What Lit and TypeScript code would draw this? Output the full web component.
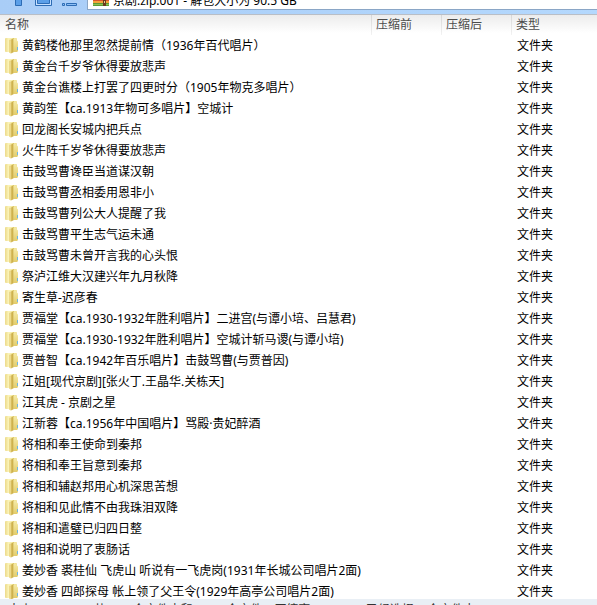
import { LitElement, html, css, svg } from "lit";
import { customElement, property } from "lit/decorators.js";

const FOLDERS = [
  "黄鹤楼他那里忽然提前情（1936年百代唱片）",
  "黄金台千岁爷休得要放悲声",
  "黄金台谯楼上打罢了四更时分（1905年物克多唱片）",
  "黄韵笙【ca.1913年物可多唱片】空城计",
  "回龙阁长安城内把兵点",
  "火牛阵千岁爷休得要放悲声",
  "击鼓骂曹谗臣当道谋汉朝",
  "击鼓骂曹丞相委用恩非小",
  "击鼓骂曹列公大人提醒了我",
  "击鼓骂曹平生志气运未通",
  "击鼓骂曹未曾开言我的心头恨",
  "祭泸江维大汉建兴年九月秋降",
  "寄生草-迟彦春",
  "贾福堂【ca.1930-1932年胜利唱片】二进宫(与谭小培、吕慧君)",
  "贾福堂【ca.1930-1932年胜利唱片】空城计斩马谡(与谭小培)",
  "贾普智【ca.1942年百乐唱片】击鼓骂曹(与贾普因)",
  "江姐[现代京剧][张火丁.王晶华.关栋天]",
  "江其虎 - 京剧之星",
  "江新蓉【ca.1956年中国唱片】骂殿·贵妃醉酒",
  "将相和奉王使命到秦邦",
  "将相和奉王旨意到秦邦",
  "将相和辅赵邦用心机深思苦想",
  "将相和见此情不由我珠泪双降",
  "将相和遣璧已归四日整",
  "将相和说明了衷肠话",
  "姜妙香 裘桂仙 飞虎山 听说有一飞虎岗(1931年长城公司唱片2面)",
  "姜妙香 四郎探母 帐上领了父王令(1929年高亭公司唱片2面)",
];

const folderIcon = html`<svg width="14" height="17" viewBox="0 0 14 17" aria-hidden="true">
  ${svg`
  <defs>
    <linearGradient id="back" x1="0" x2="1"><stop offset="0" stop-color="#ecd98a"/><stop offset=".3" stop-color="#fbf4b8"/><stop offset="1" stop-color="#efe08f"/></linearGradient>
    <linearGradient id="fold" x1="0" x2="1"><stop offset="0" stop-color="#e6d07a"/><stop offset=".6" stop-color="#cdb04c"/><stop offset="1" stop-color="#dcc465"/></linearGradient>
    <linearGradient id="front" x1="0" x2="0" y1="0" y2="1"><stop offset="0" stop-color="#f5eaa6"/><stop offset="1" stop-color="#e2cc6c"/></linearGradient>
  </defs>
  <path d="M0 2q0-1 1-1h10q1 0 1 1v13H1q-1 0-1-1z" fill="url(#back)"/>
  <path d="M5 3l4-2v14l-3 1.500-1-1z" fill="url(#fold)"/>
  <path d="M4 2.500l2 1v13l-2-1z" fill="#ecd98a"/>
  <path d="M8.500 2q3.500-1 3.500 1.500l1 1v9.500l-1 1H8.500z" fill="url(#front)"/>
  <path d="M12.500 10v3" stroke="#6db6e0"/>`}
</svg>`;

@customElement("archive-toolbar")
export class ArchiveToolbar extends LitElement {
  static styles = css`
    :host { display: flex; height: 15px; overflow: hidden; background: linear-gradient(90deg, #a9cdf7, #b4d8fd); border-bottom: 1px solid #b9bec6; box-sizing: border-box; }
    button { border: 0; padding: 0; margin: 0; background: none; height: 8px; display: block; }
    .tools { display: flex; gap: 10px; padding-left: 13px; width: 74px; flex: none; box-sizing: content-box; }
    .path { flex: 1; display: flex; gap: 4px; height: 9px; padding-left: 5px; background: #fff; border: solid #8aa6c6; border-width: 0 0 1px 1px; overflow: hidden; }
    .path svg { flex: none; }
    input { flex: 1; min-width: 0; border: 0; padding: 0; height: 16px; margin-top: -7px; background: none; color: #000; font: 12px/16px "Noto Sans", "Noto Sans CJK SC", sans-serif; outline: 0; }
    svg { display: block; }
  `;
  render() {
    return html`
      <div class="tools">
        <button aria-label="向上"><svg width="12" height="8"><path d="M2.500 -1v6.500h6v-6.500z" fill="#5b9fe8" stroke="#2d6cb5"/></svg></button>
        <button aria-label="图标视图"><svg width="17" height="8"><path d="M.5 -1v6.500h16v-6.500z" fill="#c5e0ff" stroke="#2d6cb5"/><path d="M2.500 -1h12v4.500h-12z" fill="#5b9fe8" stroke="#2d6cb5"/></svg></button>
        <button aria-label="列表视图"><svg width="16" height="8"><path d="M.5 3.500h2v2h-2zM4.500 3.500h10v2h-10z" fill="#8dbff5" stroke="#2d6cb5"/></svg></button>
      </div>
      <div class="path">
        <svg width="16" height="8" aria-hidden="true"><path d="M0 0h16v1H0z" fill="#d9542f"/><path d="M0 1h16v2H0z" fill="#f3a33a"/><path d="M0 3h16v3H0z" fill="#5c9a35"/><path d="M0 4h16v1H0z" fill="#8cc152"/><path d="M10 0h3v6h-3z" fill="#6b3a1d"/><path d="M11 1h1v2h-1z" fill="#e5c890"/></svg>
        <input aria-label="路径" value="京剧.zip.001 - 解包大小为 90.5 GB" />
      </div>`;
  }
}

@customElement("file-table")
export class FileTable extends LitElement {
  @property({ attribute: false }) names: string[] = [];
  static styles = css`
    :host { display: block; }
    table { width: 100%; border-collapse: separate; border-spacing: 0; table-layout: fixed; }
    th, td { box-sizing: border-box; padding: 0; text-align: left; font-weight: 400; white-space: nowrap; line-height: 20px; }
    th { height: 20px; color: #4c4c4c; padding-left: 5px; background: linear-gradient(#ececec, #fff 90%); vertical-align: top; }
    td { height: 21px; }
    th + th { padding-left: 4px; border-left: 1px solid; border-image: linear-gradient(#d4d4d4, #f4f4f4) 1; }
    .size { width: 70px; }
    .type { width: 86px; }
    .name { display: flex; align-items: center; gap: 3px; height: 21px; padding-left: 5px; }
    .kind { padding-left: 6px; }
    svg { display: block; flex: none; }
  `;
  render() {
    return html`<table>
      <thead><tr><th>名称</th><th class="size">压缩前</th><th class="size">压缩后</th><th class="type">类型</th></tr></thead>
      <tbody>${this.names.map(
        (n) => html`<tr><td><div class="name">${folderIcon}<span>${n}</span></div></td><td></td><td></td><td class="kind">文件夹</td></tr>`
      )}</tbody>
    </table>`;
  }
}

@customElement("app-root")
export class AppRoot extends LitElement {
  static styles = css`
    :host { display: flex; flex-direction: column; height: 100vh; overflow: hidden; background: #fff; color: #000; font: 12px/20px "Noto Sans", "Noto Sans CJK SC", sans-serif; }
    archive-toolbar { flex: none; }
    file-table { flex: 1; min-height: 0; overflow: hidden; }
    footer { display: flex; gap: 12px; flex: none; box-sizing: border-box; height: 6px; overflow: hidden; background: #e9eff5; color: #333; line-height: 22px; white-space: nowrap; padding-left: 8px; }
  `;
  render() {
    return html`
      <archive-toolbar></archive-toolbar>
      <file-table .names=${FOLDERS}></file-table>
      <footer><span>大小: 90.5 GB</span><span>共 540 个文件夹和 3300 个文件</span><span>压缩率 100.0%</span><span>已经选择 0 个文件夹</span></footer>`;
  }
}
